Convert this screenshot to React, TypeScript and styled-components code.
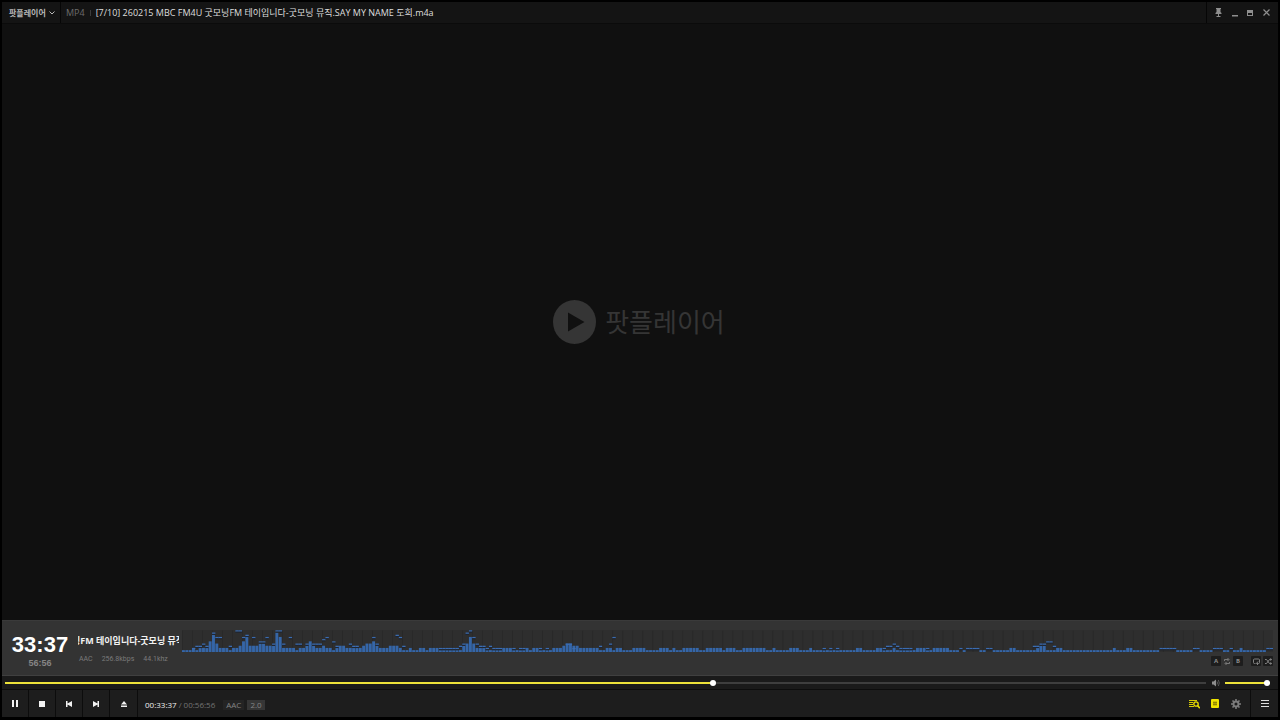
import React, { useState } from 'react';
import styled, { createGlobalStyle } from 'styled-components';

const GlobalStyle = createGlobalStyle`
  * { box-sizing: border-box; }
  html, body { margin: 0; background: #000; }
  body, button, input {
    font-family: "Open Sans", "Noto Sans CJK KR", sans-serif;
    font-size: 9px;
  }
`;

const Window = styled.div`
  display: flex;
  flex-direction: column;
  min-height: 100vh;
  padding: 2px 2px 3px;
  background: #000;
  color: #d0d0d0;
`;

const TitleBar = styled.header`
  display: flex;
  align-items: stretch;
  height: 22px;
  background: #141414;
  border-bottom: 1px solid #0b0b0b;
`;

const BrandButton = styled.button`
  display: flex;
  align-items: center;
  gap: 3px;
  width: 59px;
  padding: 0 0 0 7px;
  border: 0;
  border-right: 1px solid #060606;
  background: none;
  color: #b8b8b8;
  font-size: 8px;
  font-weight: 700;
  white-space: nowrap;
`;

const TitleInfo = styled.div`
  display: flex;
  flex: 1;
  align-items: center;
  gap: 5px;
  padding-left: 5px;
  white-space: nowrap;
`;

const Format = styled.span`
  color: #6c6c6c;
`;

const Divider = styled.span`
  width: 1px;
  height: 6px;
  background: #3c3c3c;
`;

const FileName = styled.h1`
  margin: 0;
  color: #dedede;
  font-size: 9px;
  font-weight: 400;
`;

const WindowButtons = styled.div`
  display: flex;
  align-items: center;
  padding: 0 1px 0 4px;
  border-left: 1px solid #060606;
`;

const IconButton = styled.button<{ $width: number; $height?: number }>`
  display: flex;
  align-items: center;
  justify-content: center;
  width: ${(p) => p.$width}px;
  height: ${(p) => p.$height ?? 20}px;
  padding: 0;
  border: 0;
  background: none;
  color: #8e8e8e;
`;

const Stage = styled.main`
  display: flex;
  flex: 1;
  align-items: center;
  justify-content: center;
  gap: 9px;
  padding-right: 2px;
  background: #101010;
  color: #353535;
`;

const StageName = styled.span`
  padding-bottom: 3px;
  font-family: "Noto Sans CJK KR", sans-serif;
  font-size: 26px;
  font-weight: 400;
  line-height: 30px;
`;

const InfoPanel = styled.section`
  display: flex;
  height: 56px;
  border-top: 1px solid #3a3a3a;
  border-bottom: 1px solid #404040;
  background: #333;
`;

const Clock = styled.div`
  display: flex;
  flex-direction: column;
  align-items: center;
  width: 76px;
  padding-top: 13px;
  font-family: "Liberation Sans", sans-serif;
  font-weight: 700;
`;

const Elapsed = styled.span`
  color: #fff;
  font-size: 22px;
  line-height: 22px;
`;

const Total = styled.span`
  color: #858585;
  font-size: 9px;
  line-height: 14px;
`;

const Track = styled.div`
  display: flex;
  flex-direction: column;
  width: 101px;
  padding-top: 13px;
`;

const Marquee = styled.div`
  overflow: hidden;
  color: #f2f2f2;
  font-weight: 700;
  line-height: 14px;
  text-indent: -6px;
  white-space: nowrap;
`;

const Details = styled.div`
  display: flex;
  gap: 9px;
  padding: 6px 0 0 1px;
  color: #7b7b7b;
  font-family: Roboto, sans-serif;
  font-size: 7px;
  line-height: 10px;
  white-space: nowrap;
`;

const Analyzer = styled.div`
  display: flex;
  flex: 1;
  flex-direction: column;
  min-width: 0;
  padding: 9px 5px 0 3px;
`;

const Graph = styled.svg`
  display: block;
  width: 100%;
  height: 22px;
`;

const ModeRow = styled.div`
  display: flex;
  justify-content: flex-end;
  gap: 2px;
  padding-top: 4px;
`;

const ModeButton = styled.button<{ $plain?: boolean; $spaced?: boolean }>`
  display: flex;
  align-items: center;
  justify-content: center;
  width: ${(p) => (p.$plain ? 8 : 10)}px;
  height: 10px;
  margin-left: ${(p) => (p.$spaced ? 6 : 0)}px;
  padding: 0;
  border: 0;
  border-radius: 1px;
  background: ${(p) => (p.$plain ? 'none' : '#1d1d1d')};
  color: #8c8c8c;
  font-size: 6px;
  font-weight: 700;
  line-height: 10px;
`;

const SeekRow = styled.div`
  display: flex;
  align-items: center;
  height: 14px;
  padding: 0 8px 0 3px;
  background: #1a1a1a;
  border-bottom: 1px solid #0d0d0d;
`;

const Slider = styled.input<{ $fill: number; $width?: number }>`
  appearance: none;
  display: block;
  flex: ${(p) => (p.$width ? 'none' : '1')};
  width: ${(p) => (p.$width ? `${p.$width}px` : 'auto')};
  min-width: 0;
  height: 6px;
  margin: 0;
  background: linear-gradient(to right, #ece23a ${(p) => p.$fill}%, #3e3e3e ${(p) => p.$fill}%)
    center / 100% 2px no-repeat;

  &::-webkit-slider-thumb {
    appearance: none;
    width: 6px;
    height: 6px;
    border: 0;
    border-radius: 50%;
    background: #fff;
  }
`;

const ControlBar = styled.footer`
  display: flex;
  align-items: stretch;
  height: 27px;
  background: #1d1d1d;
`;

const PlayButton = styled.button`
  display: flex;
  align-items: center;
  justify-content: center;
  width: 27px;
  padding: 0;
  border: 0;
  border-right: 1px solid #0c0c0c;
  background: none;
  color: #f2f2f2;

  &:last-of-type {
    width: 28px;
  }
`;

const Status = styled.div`
  display: flex;
  flex: 1;
  align-items: center;
  gap: 2px;
  padding: 2px 0 0 7px;
  color: #747474;
  font-size: 8px;
  line-height: 10px;
`;

const Current = styled.span`
  color: #f0f0f0;
`;

const Tag = styled.span<{ $first?: boolean; $bright?: boolean }>`
  margin-left: ${(p) => (p.$first ? 6 : 1)}px;
  padding: 0 3px;
  background: ${(p) => (p.$bright ? '#363636' : '#242424')};
  color: #858585;
`;

const Tools = styled.div`
  display: flex;
  align-items: center;
`;

const MenuButton = styled(IconButton)`
  height: 27px;
  margin-left: 4px;
  border-left: 1px solid #0c0c0c;
  color: #ddd;
`;

const BANDS = 327;

/* Lit rows per band, one digit each, for runs that start at the given band. Others show one row. */
const levelRuns: [number, string][] = [
  [3, '21222'],
  [8, '5842221223'],
  [18, '57333'],
  [23, '44333'],
  [28, '9722221223'],
  [38, '5322322'],
  [45, '1233222223'],
  [55, '4453222'],
  [62, '333211211221222'],
  [84, '34742221'],
  [96, '222'],
  [103, '212211'],
  [111, '22234433'],
  [119, '222222'],
  [127, '22122'],
  [135, '2222'],
  [143, '222'],
  [147, '2'],
  [150, '22222'],
  [157, '22222'],
  [163, '222'],
  [168, '2222222'],
  [177, '2'],
  [182, '222'],
  [188, '2'],
  [202, '22'],
  [208, '22'],
  [213, '2'],
  [220, '222'],
  [225, '22222'],
  [233, '0'],
  [235, '0000'],
  [241, '00'],
  [248, '22'],
  [256, '2331'],
  [262, '22'],
  [279, '2'],
  [283, '22'],
  [293, '00000'],
  [303, '00'],
  [309, '000'],
  [314, '0'],
  [317, '2'],
  [325, '00'],
];

const levels: number[] = Array.from({ length: BANDS }, () => 1);
levelRuns.forEach(([start, run]) => {
  run.split('').forEach((digit, offset) => {
    levels[start + offset] = Number(digit);
  });
});

/* Falling peak markers, keyed by band. */
const peaks: Record<number, number> = {
  3: 2, 4: 3, 5: 3, 6: 4, 7: 3, 9: 9, 10: 7, 11: 7, 14: 3, 16: 10, 17: 10, 18: 7, 19: 8,
  21: 7, 23: 5, 24: 5, 25: 7, 27: 4, 28: 10, 29: 10, 30: 4, 32: 7, 34: 4, 35: 4, 37: 4,
  39: 4, 40: 4, 41: 4, 42: 6, 43: 7, 45: 5, 46: 3, 50: 4, 51: 3, 52: 3, 57: 7, 58: 4,
  64: 8, 65: 7, 66: 3, 77: 2, 78: 2, 79: 2, 80: 2, 81: 2, 82: 2, 83: 3, 84: 4, 85: 9,
  86: 10, 87: 7, 88: 4, 89: 3, 90: 3, 91: 2, 92: 3, 93: 2, 94: 2, 95: 2, 99: 2, 101: 2,
  102: 2, 107: 2, 109: 2, 115: 4, 116: 4, 117: 2, 125: 3, 128: 4, 129: 7, 192: 2, 194: 2,
  196: 2, 210: 2, 211: 3, 212: 3, 213: 4, 214: 3, 215: 2, 216: 2, 217: 2, 218: 2, 223: 2,
  233: 2, 235: 2, 236: 2, 237: 2, 238: 2, 241: 2, 242: 2, 255: 3, 256: 3, 257: 4, 258: 4,
  259: 5, 260: 5, 261: 3, 293: 2, 294: 2, 295: 2, 296: 2, 297: 2, 303: 2, 304: 2, 309: 2,
  310: 2, 311: 2, 314: 2, 325: 2, 326: 2,
};

function SpectrumGraph() {
  return (
    <Graph viewBox="0 0 981 66" preserveAspectRatio="none" role="img" aria-label="Spectrum">
      <rect width="981" height="66" fill="#2e2e2e" />
      {levels.map((level, i) => {
        const height = level === 0 ? 0 : level * 6.6 - 1;
        const peak = peaks[i];
        return (
          <g key={i}>
            {i % 3 === 0 && <rect x={i * 3} y="2" width="0.6" height="64" fill="#272727" />}
            <rect x={i * 3} y={66 - height} width="2.6" height={height} fill="#3566a8" />
            {peak !== undefined && (
              <>
                <rect x={i * 3} y={66 - peak * 6.6 + 1} width="3" height="4" fill="#3a6cb2" />
                {peak > level && (
                  <rect x={i * 3} y={66 - peak * 6.6 + 5} width="3" height="3" fill="#1d2430" />
                )}
              </>
            )}
          </g>
        );
      })}
    </Graph>
  );
}

const iconProps = (width: number, height: number, fill = 'currentColor') => ({
  width,
  height,
  viewBox: `0 0 ${width} ${height}`,
  fill,
  'aria-hidden': true,
});

export default function App() {
  const [position, setPosition] = useState(59);
  const [volume, setVolume] = useState(100);

  return (
    <>
      <GlobalStyle />
      <Window>
        <TitleBar>
          <BrandButton>
            팟플레이어
            <svg {...iconProps(6, 4, 'none')} stroke="currentColor" strokeWidth="1">
              <path d="M.5 .5 3 3 5.500 .5" />
            </svg>
          </BrandButton>
          <TitleInfo>
            <Format>MP4</Format>
            <Divider />
            <FileName>[7/10] 260215 MBC FM4U 굿모닝FM 테이입니다-굿모닝 뮤직.SAY MY NAME 도희.m4a</FileName>
          </TitleInfo>
          <WindowButtons>
            <IconButton $width={15} aria-label="Always on top">
              <svg {...iconProps(7, 9)}>
                <path d="M1 0h5v1H5.500v3l1 1v1h-6V5l1-1V1H1zM3 6h1v2h1.500v1h-4V8H3z" />
              </svg>
            </IconButton>
            <IconButton $width={17} aria-label="Minimize">
              <svg {...iconProps(6, 8)}><path d="M0 6h6v1.500H0z" /></svg>
            </IconButton>
            <IconButton $width={13} aria-label="Maximize">
              <svg {...iconProps(6, 6)}><path d="M0 0h6v6H0zM1 3v2h4V3z" fillRule="evenodd" /></svg>
            </IconButton>
            <IconButton $width={21} aria-label="Close">
              <svg {...iconProps(7, 7, 'none')} stroke="currentColor" strokeWidth="1.200">
                <path d="M.5 .5l6 6M6.500 .5l-6 6" />
              </svg>
            </IconButton>
          </WindowButtons>
        </TitleBar>

        <Stage>
          <svg width="43" height="44" viewBox="0 0 43 44" aria-hidden="true">
            <ellipse cx="21.500" cy="22" rx="21.500" ry="22" fill="#353535" />
            <path d="M15 12.500v19L31.500 22z" fill="#101010" />
          </svg>
          <StageName>팟플레이어</StageName>
        </Stage>

        <InfoPanel>
          <Clock>
            <Elapsed>33:37</Elapsed>
            <Total>56:56</Total>
          </Clock>
          <Track>
            <Marquee>닝FM 테이입니다-굿모닝 뮤직</Marquee>
            <Details>
              <span>AAC</span>
              <span>256.8kbps</span>
              <span>44.1khz</span>
            </Details>
          </Track>
          <Analyzer>
            <SpectrumGraph />
            <ModeRow>
              <ModeButton aria-label="Repeat start">A</ModeButton>
              <ModeButton $plain aria-label="Repeat section">
                <svg {...iconProps(6, 7, 'none')} stroke="currentColor" strokeWidth=".8">
                  <path d="M.5 3V1.500h4M3.500 0 5 1.500 3.500 3M5.500 4v1.500h-4M2.500 4 1 5.500 2.500 7" />
                </svg>
              </ModeButton>
              <ModeButton aria-label="Repeat end">B</ModeButton>
              <ModeButton $spaced aria-label="Repeat">
                <svg {...iconProps(7, 7, 'none')} stroke="currentColor" strokeWidth=".9">
                  <path d="M2.500 5.500H1.500Q.5 5.500 .5 4.500V2Q.5 1 1.500 1h4Q6.500 1 6.500 2v2.500q0 1-1 1H4M5 3.500l-1.500 2 1.500 1.500" />
                </svg>
              </ModeButton>
              <ModeButton aria-label="Shuffle">
                <svg {...iconProps(7, 7, 'none')} stroke="currentColor" strokeWidth=".9">
                  <path d="M0 1.500h1.500l3 4h2M0 5.500h1.500l3-4h2M5.500 .3l1 1.200-1 1.200M5.500 4.300l1 1.200-1 1.200" />
                </svg>
              </ModeButton>
            </ModeRow>
          </Analyzer>
        </InfoPanel>

        <SeekRow>
          <Slider
            type="range"
            aria-label="Seek"
            min={0}
            max={100}
            value={position}
            $fill={position}
            onChange={(e) => setPosition(Number(e.target.value))}
          />
          <IconButton $width={19} $height={12} aria-label="Mute">
            <svg {...iconProps(8, 8)}>
              <path d="M0 2.500h1.500L4 .5v7L1.500 5.500H0z" />
              <path d="M5 2.500q1 1.500 0 3M6.300 1q2 3 0 6" fill="none" stroke="#666" strokeWidth=".8" />
            </svg>
          </IconButton>
          <Slider
            type="range"
            aria-label="Volume"
            min={0}
            max={100}
            value={volume}
            $fill={volume}
            $width={45}
            onChange={(e) => setVolume(Number(e.target.value))}
          />
        </SeekRow>

        <ControlBar>
          <PlayButton aria-label="Pause">
            <svg {...iconProps(6, 7)}><path d="M0 0h2v7H0zM4 0h2v7H4z" /></svg>
          </PlayButton>
          <PlayButton aria-label="Stop">
            <svg {...iconProps(6, 6)}><path d="M0 0h6v6H0z" /></svg>
          </PlayButton>
          <PlayButton aria-label="Previous">
            <svg {...iconProps(6, 6)}><path d="M0 0h1.500v2.500L6 0v6L1.500 3.500V6H0z" /></svg>
          </PlayButton>
          <PlayButton aria-label="Next">
            <svg {...iconProps(6, 6)}><path d="M6 0H4.500v2.500L0 0v6l4.500-2.500V6H6z" /></svg>
          </PlayButton>
          <PlayButton aria-label="Open">
            <svg {...iconProps(6, 6)}><path d="M3 0l3 3.500H0zM0 4.500h6V6H0z" /></svg>
          </PlayButton>
          <Status>
            <Current>00:33:37</Current>
            <span>/</span>
            <span>00:56:56</span>
            <Tag $first>AAC</Tag>
            <Tag $bright>2.0</Tag>
          </Status>
          <Tools>
            <IconButton $width={22} aria-label="Search playlist">
              <svg {...iconProps(11, 10, 'none')} stroke="#ece000">
                <path d="M0 1.500h8M0 3.500h4M0 5.500h4M0 7.500h5" strokeWidth=".9" />
                <circle cx="7" cy="5" r="2.200" strokeWidth="1.300" />
                <path d="M8.600 6.600l2.200 2.600" strokeWidth="1.500" />
              </svg>
            </IconButton>
            <IconButton $width={20} aria-label="Playlist">
              <svg {...iconProps(8, 9)}>
                <rect width="8" height="9" rx="1" fill="#f0e400" />
                <path d="M2 2.500h4v4H2z" fill="#b3a500" />
                <path d="M2 3.500h4M2 5.500h4" stroke="#7c7200" strokeWidth=".6" />
              </svg>
            </IconButton>
            <IconButton $width={21} aria-label="Settings">
              <svg {...iconProps(10, 10, 'none')} stroke="#7c7c7c">
                <circle cx="5" cy="5" r="2.500" strokeWidth="1.900" />
                <path
                  d="M5 0v2M5 8v2M0 5h2M8 5h2M1.500 1.500l1.400 1.400M7.100 7.100l1.400 1.400M1.500 8.500l1.400-1.400M7.100 2.900l1.400-1.400"
                  strokeWidth="1.600"
                />
              </svg>
            </IconButton>
            <MenuButton $width={28} aria-label="Menu">
              <svg {...iconProps(8, 7)}><path d="M0 0h8v1H0zM0 3h8v1H0zM0 6h8v1H0z" /></svg>
            </MenuButton>
          </Tools>
        </ControlBar>
      </Window>
    </>
  );
}
